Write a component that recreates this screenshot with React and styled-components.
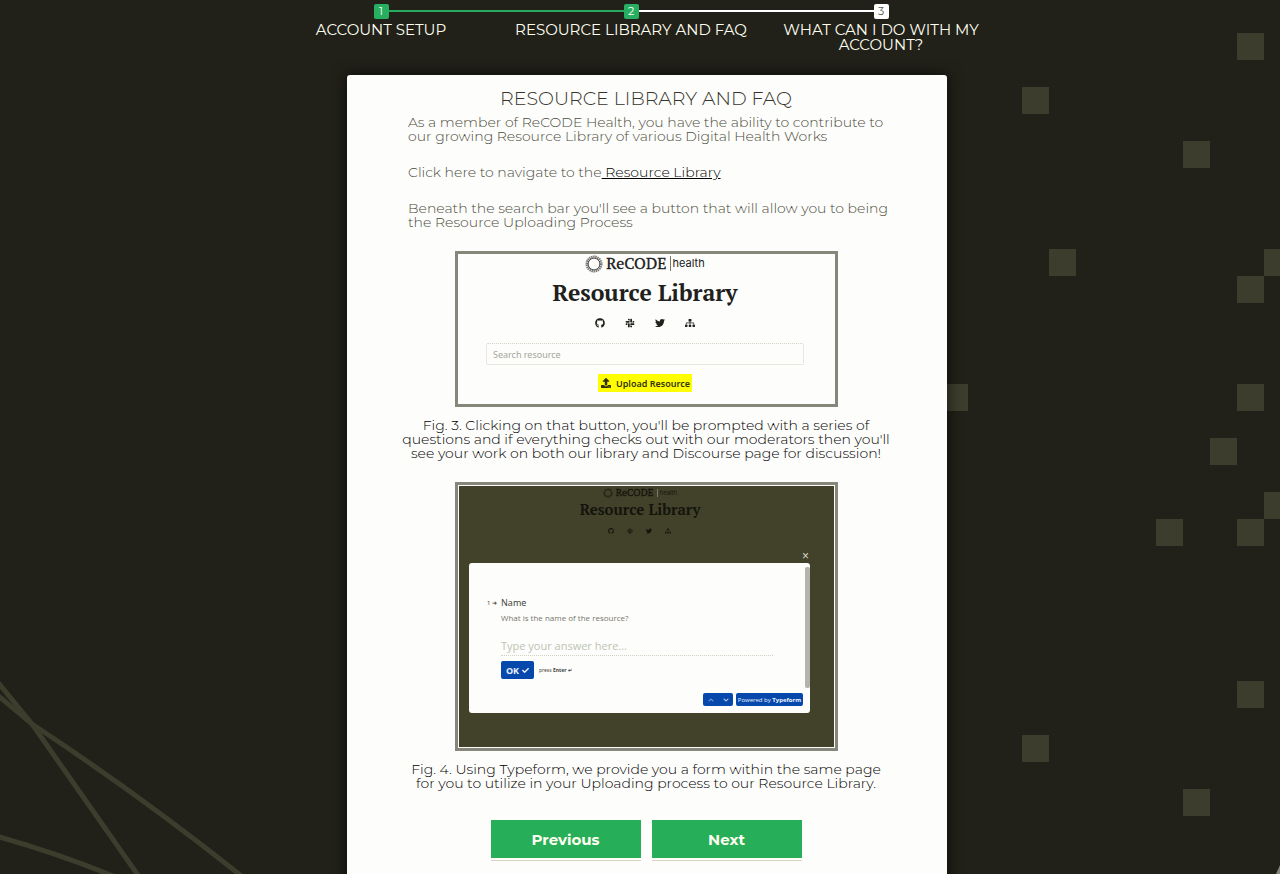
import React from "react";
import styled, { createGlobalStyle, css } from "styled-components";
import {
  FaGithub, FaSlack, FaTwitter, FaSitemap, FaUpload, FaCheck, FaChevronUp, FaChevronDown,
} from "react-icons/fa";

const GlobalStyle = createGlobalStyle`
  *, *::before, *::after { box-sizing: border-box; }
  body {
    margin: 0;
    background: #212119;
    font-family: Montserrat, Inter, "Liberation Sans", sans-serif;
  }
  h1, h2, p, ol, figure { margin: 0; padding: 0; }
`;

const Page = styled.div`
  position: relative;
  min-height: 100vh;
  overflow: hidden;
`;

const Backdrop = styled.svg`
  position: absolute;
  top: 0;
  ${(p) => (p.$side === "right" ? "right: 0;" : "left: 0;")}
  pointer-events: none;
`;

const Content = styled.main`
  position: relative;
  display: flex;
  flex-direction: column;
  align-items: center;
  padding-left: 14px;
`;

const Steps = styled.ol`
  display: flex;
  width: 100%;
  max-width: 750px;
  min-height: 75px;
  padding-top: 4px;
  margin-right: 32px;
  list-style: none;
`;

const Step = styled.li`
  position: relative;
  flex: 1;
  display: flex;
  flex-direction: column;
  align-items: center;
  gap: 3px;
  color: #fffff0;
  font-size: 15px;
  line-height: 15px;
  text-align: center;
  text-transform: uppercase;

  &:not(:first-child)::before {
    content: "";
    position: absolute;
    top: 6px;
    right: 50%;
    width: 100%;
    height: 2px;
    background: ${(p) => (p.$done ? "#28ab5c" : "#fff")};
  }
`;

const StepNumber = styled.span`
  position: relative;
  z-index: 1;
  width: 15px;
  height: 15px;
  border-radius: 2px;
  background: ${(p) => (p.$done ? "#27ae60" : "#fff")};
  color: ${(p) => (p.$done ? "#fff" : "#55554a")};
  font-size: 11px;
`;

const StepLabel = styled.span`
  padding: 0 ${(p) => (p.$narrow ? 24 : 0)}px;
`;

const Card = styled.section`
  display: flex;
  flex-direction: column;
  align-items: center;
  width: 100%;
  max-width: 600px;
  padding: 14px 62px 60px 60px;
  border-radius: 3px;
  background: #fdfdfb;
  box-shadow: 0 0 14px 1px rgba(0, 0, 0, 0.6);
`;

const Title = styled.h1`
  color: #35352c;
  font-size: 19px;
  font-weight: 300;
  line-height: 20px;
  text-transform: uppercase;
`;

const bodyText = css`
  font-size: 14px;
  font-weight: 300;
  line-height: 14px;
`;

const Paragraph = styled.p`
  ${bodyText}
  width: 100%;
  padding-left: 1px;
  margin: ${(p) => (p.$first ? "6px" : "22px")} 0 0;
  color: #4c4c3c;
  white-space: nowrap;
`;

const TextLink = styled.a`
  color: #000;
  text-decoration: underline;
  white-space: pre;
`;

const Figure = styled.figure`
  display: flex;
  flex-direction: column;
  align-items: center;
  width: 100%;
  margin-top: 22px;
`;

const Caption = styled.figcaption`
  ${bodyText}
  margin-top: 11px;
  color: #000;
  text-align: center;
  white-space: nowrap;
`;

const Shot = styled.div`
  display: flex;
  flex-direction: column;
  width: 100%;
  max-width: 383px;
  border: 3px solid #86867a;
  font-family: "Noto Sans", "Open Sans", sans-serif;
`;

const LibraryShot = styled(Shot)`
  align-items: center;
  height: 156px;
  padding-right: 2px;
  color: #20201c;
`;

const Brand = styled.div`
  display: flex;
  align-items: center;
  height: ${(p) => (p.$small ? 13 : 19)}px;
  gap: 3px;
  font-family: "PT Serif", "Noto Serif", "Liberation Serif", serif;
  font-size: ${(p) => (p.$small ? 10 : 16)}px;
  line-height: 19px;
  -webkit-text-stroke: 0.3px currentColor;
`;

const BrandSuffix = styled.span`
  padding-left: 2px;
  border-left: 1px solid #77776c;
  font-family: Inter, sans-serif;
  font-size: ${(p) => (p.$small ? 6 : 11)}px;
  line-height: ${(p) => (p.$small ? 8 : 15)}px;
  -webkit-text-stroke: 0;
`;

const LibraryTitle = styled.h2`
  font-family: "PT Serif", "Noto Serif", "Liberation Serif", serif;
  font-size: ${(p) => (p.$small ? 15 : 23)}px;
  line-height: ${(p) => (p.$small ? 20 : 40)}px;
  font-weight: 700;
`;

const IconRow = styled.div`
  display: flex;
  gap: ${(p) => (p.$small ? 13 : 20)}px;
  margin-top: ${(p) => (p.$small ? 9 : 5)}px;
  font-size: ${(p) => (p.$small ? 6 : 10)}px;
`;

const SearchInput = styled.input`
  width: 318px;
  height: 22px;
  margin-top: 15px;
  padding: 0 6px;
  border: 1px dotted #d4d4c8;
  border-radius: 2px;
  background: transparent;
  font-family: inherit;
  font-size: 9px;

  &::placeholder { color: #a5a59c; opacity: 1; }
`;

const UploadButton = styled.button`
  display: flex;
  align-items: center;
  gap: 5px;
  height: 18px;
  margin-top: 9px;
  padding: 0 2px 0 3px;
  border: 0;
  background: #ffff00;
  color: #33330c;
  font-family: inherit;
  font-size: 9px;
  font-weight: 600;
`;

const FormShot = styled(Shot)`
  height: 269px;
  padding: 1px;
`;

const Overlay = styled.div`
  display: flex;
  flex-direction: column;
  align-items: center;
  flex: 1;
  background: #42422b;
  color: #14140c;
`;

const OverlayHead = styled.div`
  display: flex;
  flex-direction: column;
  align-items: center;
  height: 63px;
  margin-right: 12px;
`;

const CloseButton = styled.button`
  align-self: flex-end;
  width: 12px;
  height: 14px;
  margin-right: 22px;
  padding: 0;
  border: 0;
  background: transparent;
  color: #d8d8cc;
  font-size: 12px;
  line-height: 14px;
`;

const Dialog = styled.form`
  position: relative;
  display: flex;
  flex-direction: column;
  align-items: flex-start;
  width: 341px;
  height: 150px;
  margin-right: 13px;
  padding: 33px 7px 7px 32px;
  border-radius: 3px;
  background: #fdfdfb;
  color: #44443c;

  &::after {
    content: "";
    position: absolute;
    top: 4px;
    right: 0;
    width: 5px;
    height: 121px;
    border-radius: 2px;
    background: #b4b4ac;
  }
`;

const Question = styled.label`
  display: flex;
  align-items: center;
  gap: 3px;
  margin-left: -14px;
  font-size: 9px;
  line-height: 14px;
`;

const QuestionNumber = styled.span`
  width: 11px;
  font-size: 6px;
`;

const Hint = styled.span`
  color: #77776c;
  font-family: "Open Sans", sans-serif;
  font-size: 8px;
  line-height: 16px;
`;

const AnswerInput = styled.input`
  width: 272px;
  height: 20px;
  margin-top: 10px;
  padding: 0;
  border: 0;
  border-bottom: 1px dotted #d0d0c4;
  background: transparent;
  font-family: "Open Sans", sans-serif;
  font-size: 11px;

  &::placeholder { color: #bcc4b4; opacity: 1; }
`;

const OkRow = styled.div`
  display: flex;
  align-items: center;
  gap: 5px;
  margin-top: 5px;
  font-size: 5px;
`;

const BlueButton = styled.button`
  display: flex;
  align-items: center;
  justify-content: center;
  gap: 3px;
  width: ${(p) => p.$width}px;
  height: ${(p) => (p.$tall ? 18 : 13)}px;
  padding: 0;
  border: 0;
  border-radius: ${(p) => (p.$flat ? 0 : 2)}px;
  background: #0648ac;
  color: #eef2ff;
  font-family: "Open Sans", sans-serif;
  font-size: ${(p) => (p.$tall ? 9 : 6)}px;
  font-weight: ${(p) => (p.$tall ? 700 : 400)};
  white-space: nowrap;
`;

const DialogFooter = styled.div`
  display: flex;
  align-self: flex-end;
  gap: 3px;
  margin-top: auto;
`;

const ArrowPair = styled.div`
  display: flex;
  overflow: hidden;
  border-radius: 2px;
`;

const Buttons = styled.div`
  display: flex;
  gap: 11px;
  margin-top: 30px;
`;

const NavButton = styled.button`
  width: 150px;
  height: 38px;
  border: 0;
  background: #27ae58;
  box-shadow: 0 2px #fdfdfb, 0 3px #d6d6c4;
  color: #fffff0;
  font-family: inherit;
  font-size: 15px;
  font-weight: 700;
`;

const squares = [
  [237, 33], [22, 87], [183, 141], [49, 249], [264, 249], [237, 276],
  [-59, 384], [237, 384], [210, 438], [264, 492], [156, 519], [237, 519],
  [237, 681], [22, 735], [183, 789],
];

const steps = [
  { label: "Account setup", done: true },
  { label: "Resource Library and FAQ", done: true },
  { label: "What can I do with my account?", narrow: true },
];

function RingLogo({ size }) {
  return (
    <svg width={size} height={size} viewBox="0 0 18 18" fill="none" stroke="currentColor" aria-hidden="true">
      <circle cx="9" cy="9" r="7" strokeWidth="3" strokeDasharray="1.4 .6" opacity=".6" />
      <circle cx="9" cy="9" r="5.8" opacity=".6" />
    </svg>
  );
}

function LibraryHeader({ small }) {
  return (
    <>
      <Brand $small={small}>
        <RingLogo size={small ? 10 : 18} />
        <span>ReCODE</span>
        <BrandSuffix $small={small}>health</BrandSuffix>
      </Brand>
      <LibraryTitle $small={small}>Resource Library</LibraryTitle>
      <IconRow $small={small}>
        <FaGithub /><FaSlack /><FaTwitter /><FaSitemap />
      </IconRow>
    </>
  );
}

export default function App() {
  return (
    <Page>
      <GlobalStyle />
      <Backdrop width="350" height="874" fill="none" stroke="#3d3d2d" strokeWidth="5" aria-hidden="true">
        <path d="M-4 680 L32 724 L140 878" />
        <path d="M-4 694 L32 724 Q144 798 244 878" />
        <path d="M-4 836 Q60 854 118 878" />
      </Backdrop>
      <Backdrop $side="right" width="340" height="874" viewBox="-60 0 340 874" fill="#3d3d2d" aria-hidden="true">
        {squares.map(([x, y]) => (
          <rect key={`${x}-${y}`} x={x} y={y} width="27" height="27" />
        ))}
        <path d="M276 874 L280 865 V874 Z" fill="#85857a" />
      </Backdrop>
      <Content>
        <Steps>
          {steps.map((step, i) => (
            <Step key={step.label} $done={step.done}>
              <StepNumber $done={step.done}>{i + 1}</StepNumber>
              <StepLabel $narrow={step.narrow}>{step.label}</StepLabel>
            </Step>
          ))}
        </Steps>
        <Card>
          <Title>Resource Library and FAQ</Title>
          <Paragraph $first>
            As a member of ReCODE Health, you have the ability to contribute to<br />
            our growing Resource Library of various Digital Health Works
          </Paragraph>
          <Paragraph>
            Click here to navigate to the<TextLink href="#library"> Resource Library</TextLink>
          </Paragraph>
          <Paragraph>
            Beneath the search bar you'll see a button that will allow you to being<br />
            the Resource Uploading Process
          </Paragraph>
          <Figure>
            <LibraryShot>
              <LibraryHeader />
              <SearchInput placeholder="Search resource" aria-label="Search resource" />
              <UploadButton type="button"><FaUpload size={10} />Upload Resource</UploadButton>
            </LibraryShot>
            <Caption>
              Fig. 3. Clicking on that button, you'll be prompted with a series of<br />
              questions and if everything checks out with our moderators then you'll<br />
              see your work on both our library and Discourse page for discussion!
            </Caption>
          </Figure>
          <Figure>
            <FormShot>
              <Overlay>
                <OverlayHead><LibraryHeader small /></OverlayHead>
                <CloseButton type="button" aria-label="Close">×</CloseButton>
                <Dialog onSubmit={(e) => e.preventDefault()}>
                  <Question htmlFor="name"><QuestionNumber>1 ➜</QuestionNumber>Name</Question>
                  <Hint>What is the name of the resource?</Hint>
                  <AnswerInput id="name" placeholder="Type your answer here..." />
                  <OkRow>
                    <BlueButton $tall $width={33}>OK <FaCheck size={7} /></BlueButton>
                    <span>press <b>Enter ↵</b></span>
                  </OkRow>
                  <DialogFooter>
                    <ArrowPair>
                      <BlueButton type="button" $flat $width={15} aria-label="Previous question"><FaChevronUp opacity=".5" /></BlueButton>
                      <BlueButton type="button" $flat $width={15} aria-label="Next question"><FaChevronDown opacity=".8" /></BlueButton>
                    </ArrowPair>
                    <BlueButton type="button" $width={67}><span>Powered by <b>Typeform</b></span></BlueButton>
                  </DialogFooter>
                </Dialog>
              </Overlay>
            </FormShot>
            <Caption>
              Fig. 4. Using Typeform, we provide you a form within the same page<br />
              for you to utilize in your Uploading process to our Resource Library.
            </Caption>
          </Figure>
          <Buttons>
            <NavButton type="button">Previous</NavButton>
            <NavButton type="button">Next</NavButton>
          </Buttons>
        </Card>
      </Content>
    </Page>
  );
}
